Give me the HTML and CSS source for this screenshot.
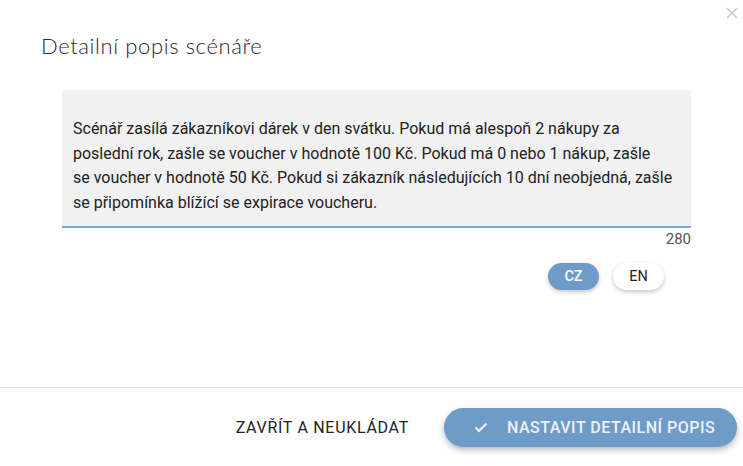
FILE: index.html
```html
<!DOCTYPE html>
<html lang="cs">
<head>
    <meta charset="UTF-8">
    <meta name="viewport" content="width=device-width, initial-scale=1.0">
    <link rel="stylesheet" href="styles.css">
    <title>Detailní popis scénáře</title>
</head>
<body>
    <div class="dialog">
        <button class="close-button" aria-label="Zavřít">
            <svg width="12" height="12" viewBox="0 0 12 12">
                <path d="M1 1 L11 11 M11 1 L1 11" stroke="#c4c4c4" stroke-width="1.3" fill="none"/>
            </svg>
        </button>

        <h1 class="dialog-title">Detailní popis scénáře</h1>

        <div class="dialog-content">
            <div class="text-field">
                <div class="text-field-input">Scénář zasílá zákazníkovi dárek v den svátku. Pokud má alespoň 2 nákupy za<br>poslední rok, zašle se voucher v hodnotě 100 Kč. Pokud má 0 nebo 1 nákup, zašle<br>se voucher v hodnotě 50 Kč. Pokud si zákazník následujících 10 dní neobjedná, zašle<br>se připomínka blížící se expirace voucheru.</div>
            </div>
            <div class="char-counter">280</div>

            <!-- Přepínač jazyka popisu -->
            <div class="lang-switch">
                <button class="lang-button active">CZ</button>
                <button class="lang-button">EN</button>
            </div>
        </div>

        <div class="dialog-actions">
            <button class="text-button">ZAVŘÍT A NEUKLÁDAT</button>
            <button class="primary-button">
                <svg width="16" height="16" viewBox="0 0 16 16">
                    <path d="M2.5 8.5 L6 12 L13.5 4.5" stroke="#eef3f9" stroke-width="2" fill="none"/>
                </svg>
                NASTAVIT DETAILNÍ POPIS
            </button>
        </div>
    </div>
</body>
</html>
```

FILE: styles.css
```css
body {
    margin: 0;
    background: white;
    font-family: Roboto, "Liberation Sans", sans-serif;
    color: #222;
}

.dialog {
    position: relative;
    width: 743px;
    height: 466px;
    display: flex;
    flex-direction: column;
}

.close-button {
    position: absolute;
    top: 7px;
    right: 5px;
    background: none;
    border: none;
    padding: 0;
    width: 12px;
    height: 12px;
    cursor: pointer;
}

.dialog-title {
    margin: 0;
    padding: 33px 0 0 41px;
    font-family: Lato, "Open Sans", sans-serif;
    font-weight: 300;
    font-size: 22px;
    letter-spacing: 0.6px;
    line-height: 25px;
    color: #2a2a2a;
}

.dialog-content {
    padding: 32px 52px 0 62px;
    flex: 1;
    border-bottom: 1px solid #e2e2e2;
}

.text-field {
    background-color: #f1f1f1;
    border-radius: 4px 4px 0 0;
    border-bottom: 2px solid #72a9db;
    padding: 27px 11px 11px 11px;
}

.text-field-input {
    font-size: 16px;
    line-height: 24.6px;
    color: #222;
    white-space: nowrap;
}

.char-counter {
    text-align: right;
    font-size: 15px;
    color: #555;
    margin-top: 2px;
}

.lang-switch {
    display: flex;
    justify-content: flex-end;
    gap: 14px;
    padding-right: 27px;
    margin-top: 15px;
}

.lang-button {
    width: 51px;
    height: 27px;
    border: none;
    border-radius: 14px;
    background: white;
    color: #222;
    font-family: Roboto, sans-serif;
    font-size: 14.5px;
    font-weight: 400;
    box-shadow: 0 2px 4px rgba(0,0,0,0.22);
    cursor: pointer;
}

.lang-button.active {
    background-color: #6e9bc7;
    color: white;
    font-weight: 500;
}

.dialog-actions {
    height: 78px;
    display: flex;
    justify-content: flex-end;
    align-items: center;
    gap: 19px;
    padding-right: 6px;
}

.text-button {
    background: none;
    border: none;
    padding: 10px 16px;
    font-family: Roboto, sans-serif;
    font-size: 16px;
    letter-spacing: 0.7px;
    color: #222;
    cursor: pointer;
}

.primary-button {
    display: flex;
    align-items: center;
    gap: 18px;
    width: 293px;
    height: 39px;
    padding: 0 0 0 29px;
    border: none;
    border-radius: 20px;
    background-color: #6e9bc7;
    color: #edf2f8;
    font-family: Roboto, sans-serif;
    font-size: 16px;
    font-weight: 500;
    letter-spacing: 0.5px;
    box-shadow: 0 3px 6px rgba(0,0,0,0.28);
    cursor: pointer;
}
```
